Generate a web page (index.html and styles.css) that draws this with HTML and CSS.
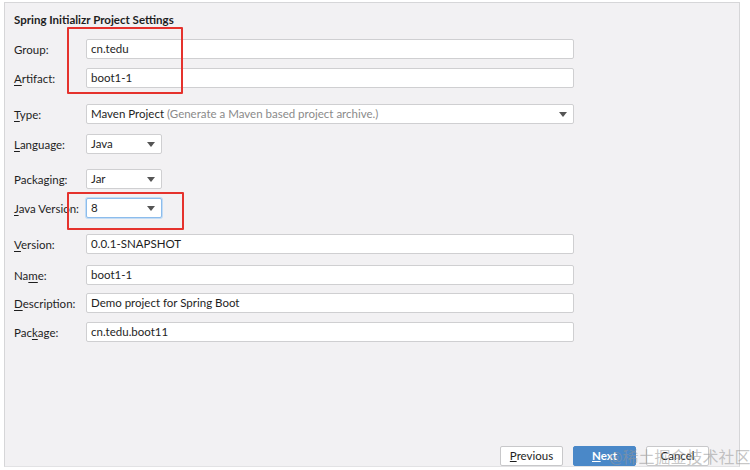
FILE: index.html
```html
<!DOCTYPE html>
<html>
<head>
<meta charset="utf-8">
<link rel="stylesheet" href="styles.css">
</head>
<body>
<div class="panel">
  <div class="title">Spring Initializr Project Settings</div>
  <div class="form">
    <div class="row g-first"><span class="label">Group:</span><div class="field">cn.tedu</div></div>
    <div class="row g9"><span class="label"><u>A</u>rtifact:</span><div class="field">boot1-1</div></div>
    <div class="row g16"><span class="label"><u>T</u>ype:</span><div class="field combo">Maven Project <span class="hint">(Generate a Maven based project archive.)</span><span class="arrow"></span></div></div>
    <div class="row g10"><span class="label"><u>L</u>anguage:</span><div class="field combo small">Java<span class="arrow"></span></div></div>
    <div class="row g15"><span class="label">Packaging:</span><div class="field combo small">Jar<span class="arrow"></span></div></div>
    <div class="row g9"><span class="label"><u>J</u>ava Version:</span><div class="field combo small focus">8<span class="arrow"></span></div></div>
    <div class="row g16"><span class="label"><u>V</u>ersion:</span><div class="field">0.0.1-SNAPSHOT</div></div>
    <div class="row g11"><span class="label">Na<u>m</u>e:</span><div class="field">boot1-1</div></div>
    <div class="row g8"><span class="label"><u>D</u>escription:</span><div class="field">Demo project for Spring Boot</div></div>
    <div class="row g9"><span class="label">Pac<u>k</u>age:</span><div class="field">cn.tedu.boot11</div></div>
  </div>
  <div class="footer">
    <div class="btn"><u>P</u>revious</div>
    <div class="btn primary"><u>N</u>ext</div>
    <div class="btn">Cancel</div>
  </div>
  <div class="mark mark1"></div>
  <div class="mark mark2"></div>
  <div class="watermark">@稀土掘金技术社区</div>
</div>
</body>
</html>
```
FILE: styles.css
```css
html, body {
  margin: 0;
  padding: 0;
  background: #ffffff;
}
body {
  width: 750px;
  height: 470px;
  overflow: hidden;
  font-family: Lato, "Noto Sans CJK SC", sans-serif;
  font-size: 11.5px;
  color: #1e1e1e;
}
.panel {
  position: relative;
  box-sizing: border-box;
  margin: 2px 0 0 4px;
  width: 736px;
  height: 465px;
  background: #f2f1f3;
  border: 1px solid #d6d6d8;
  border-bottom-color: #e2e2e4;
  display: flex;
  flex-direction: column;
  padding: 0 0 0 9px;
}
.title {
  font-weight: 700;
  margin-top: 10px;
  line-height: 14px;
  height: 14px;
}
.form {
  display: flex;
  flex-direction: column;
}
.row {
  display: flex;
  align-items: center;
  height: 20px;
}
.g-first { margin-top: 12px; }
.g8 { margin-top: 8px; }
.g9 { margin-top: 9px; }
.g10 { margin-top: 10px; }
.g11 { margin-top: 11px; }
.g15 { margin-top: 15px; }
.g16 { margin-top: 16px; }
.label {
  width: 72px;
  flex: none;
}
.label u { text-underline-offset: 2px; }
.field {
  position: relative;
  box-sizing: border-box;
  width: 488px;
  height: 20px;
  background: #ffffff;
  border: 1px solid #cfcfd1;
  border-radius: 2px;
  padding: 0 0 0 4px;
  line-height: 18px;
  white-space: nowrap;
}
.field.small { width: 76px; }
.field.focus {
  border: 1px solid #8cbcec;
  box-shadow: 0 0 0 1px #c3dcf5;
}
.hint { color: #8a8a8a; }
.arrow {
  position: absolute;
  right: 6px;
  top: 7px;
  width: 0;
  height: 0;
  border-left: 4px solid transparent;
  border-right: 4px solid transparent;
  border-top: 5px solid #555555;
}
.footer {
  margin-top: auto;
  display: flex;
  justify-content: flex-end;
  gap: 10px;
  padding-right: 30px;
}
.btn {
  box-sizing: border-box;
  width: 63px;
  height: 20px;
  border: 1px solid #c8c8ca;
  border-radius: 2px;
  background: #ffffff;
  text-align: center;
  line-height: 18px;
}
.btn.primary {
  background: #4a88c8;
  border-color: #4a88c8;
  color: #ffffff;
  font-weight: 700;
}
.mark {
  position: absolute;
  box-sizing: border-box;
  border: 2px solid #e5322d;
  border-radius: 1px;
}
.mark1 { left: 62px; top: 24px; width: 116px; height: 67px; }
.mark2 { left: 62px; top: 189px; width: 117px; height: 38px; }
.watermark {
  position: absolute;
  left: 604px;
  top: 444px;
  font-size: 16px;
  line-height: 20px;
  color: rgba(150, 150, 150, 0.55);
  white-space: nowrap;
}
```
